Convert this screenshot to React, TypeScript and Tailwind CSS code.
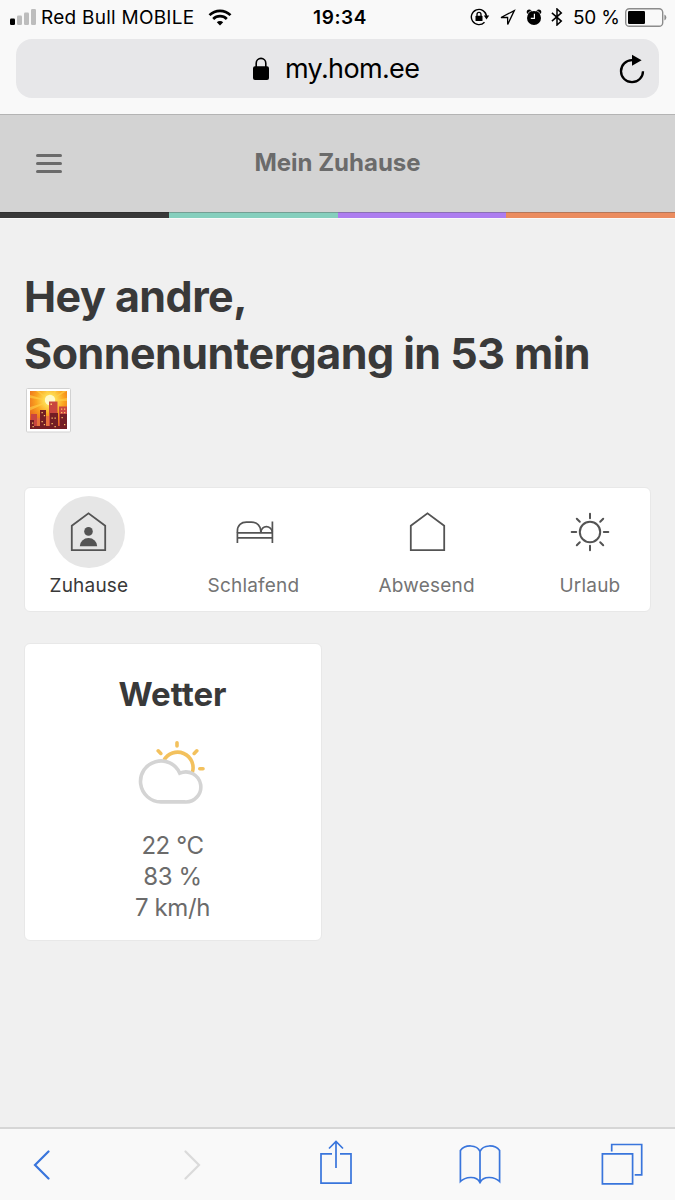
import { useState } from 'react';
import type { ReactNode } from 'react';

type IconProps = { className?: string };

// Status bar icons
const SignalIcon = ({ className }: IconProps) => (
  <svg className={className} width="26" height="16" viewBox="0 0 26 16">
    <rect x="0" y="9.5" width="5" height="6.5" rx="1.2" fill="#000" />
    <rect x="7" y="6.5" width="5" height="9.5" rx="1.2" fill="#bdbdbd" />
    <rect x="14" y="3.5" width="5" height="12.5" rx="1.2" fill="#bdbdbd" />
    <rect x="21" y="0" width="5" height="16" rx="1.2" fill="#bdbdbd" />
  </svg>
);

const WifiIcon = ({ className }: IconProps) => (
  <svg className={className} width="24" height="17" viewBox="0 0 24 17" fill="none" stroke="#000" strokeWidth="2.7">
    <path d="M1.5 6.1a15 15 0 0 1 21 0" />
    <path d="M5.2 10a9.6 9.6 0 0 1 13.6 0" />
    <path d="M12 16.6l-3.2-3.3a4.6 4.6 0 0 1 6.4 0z" fill="#000" stroke="none" />
  </svg>
);

const RotationLockIcon = ({ className }: IconProps) => (
  <svg className={className} width="20" height="18" viewBox="0 0 20 18" fill="none" stroke="#000">
    <path d="M14.5 14.2A7.6 7.6 0 1 1 16.5 8.2" strokeWidth="1.4" />
    <path d="M13.8 7.6h5.4l-2.7 3.8z" fill="#000" stroke="none" />
    <rect x="5.5" y="7.8" width="7" height="5.2" rx="0.6" fill="#000" stroke="none" />
    <path d="M7 8V6.4a2 2 0 0 1 4 0V8" strokeWidth="1.3" />
  </svg>
);

const LocationIcon = ({ className }: IconProps) => (
  <svg className={className} width="16" height="17" viewBox="0 0 16 17" fill="none" stroke="#000" strokeWidth="1.3">
    <path d="M14.3 1.6L1 8.5h6.6l.1 7z" />
  </svg>
);

const AlarmIcon = ({ className }: IconProps) => (
  <svg className={className} width="16" height="17" viewBox="0 0 16 17">
    <circle cx="8" cy="9" r="7" />
    <circle cx="3.2" cy="2.9" r="2.5" />
    <circle cx="12.8" cy="2.9" r="2.5" />
    <path d="M.9 6.1A8 8 0 0 1 5.2 1.8M15.1 6.1a8 8 0 0 0-4.3-4.3" stroke="#f9f9f9" strokeWidth=".7" fill="none" />
    <path d="M8.4 4.8v4.6H4.8" stroke="#f9f9f9" strokeWidth="1.2" fill="none" />
  </svg>
);

const BluetoothIcon = ({ className }: IconProps) => (
  <svg className={className} width="12" height="18" viewBox="0 0 12 18" fill="none" stroke="#000" strokeWidth="1.5">
    <path d="M.9 4.9l9.4 8.2L6 17V1l4.3 3.9L.9 13.1" />
  </svg>
);

const BatteryIcon = ({ className }: IconProps) => (
  <svg className={className} width="42" height="19" viewBox="0 0 42 19">
    <rect x=".7" y=".7" width="37" height="17.6" rx="3.6" fill="none" stroke="#8c8c8c" strokeWidth="1.4" />
    <rect x="3" y="3" width="17" height="13" rx="1.2" />
    <path d="M39.4 6.4v6.2a3.4 3.4 0 0 0 0-6.2z" fill="#8c8c8c" />
  </svg>
);

// Address bar icons
const LockIcon = ({ className }: IconProps) => (
  <svg className={className} width="18" height="24" viewBox="0 0 18 24">
    <rect x="1" y="9.3" width="16" height="13.7" rx="2" />
    <path d="M4.2 10V6.2a4.8 4.8 0 0 1 9.6 0V10" fill="none" stroke="#000" strokeWidth="1.6" />
  </svg>
);

const ReloadIcon = () => (
  <svg width="26" height="30" viewBox="0 0 26 30">
    <path d="M24 17.2A11 11 0 1 1 13 6.2h3" fill="none" stroke="#000" strokeWidth="2.3" />
    <path d="M13 .8v11l9.6-5.5z" />
  </svg>
);

// Mode icons
const HousePath = () => <path d="M1.8 38.2V13.8L18.5 1.3l16.7 12.5v24.4z" />;

const HomeIcon = () => (
  <svg width="37" height="40" viewBox="0 0 37 40" fill="none" stroke="#545454" strokeWidth="1.8">
    <HousePath />
    <circle cx="18.5" cy="19.4" r="4.3" fill="#545454" stroke="none" />
    <path d="M9.8 34.3a8.7 8.2 0 0 1 17.4 0z" fill="#545454" stroke="none" />
  </svg>
);

const AwayIcon = () => (
  <svg className="ml-[2px]" width="37" height="40" viewBox="0 0 37 40" fill="none" stroke="#545454" strokeWidth="1.8">
    <HousePath />
  </svg>
);

const BedIcon = () => (
  <svg className="ml-[3px]" width="38" height="24" viewBox="0 0 38 24" fill="none" stroke="#545454" strokeWidth="1.7">
    <path d="M1.4 23V12.5M36.4 1.5V23M1.4 12.9h35M1.4 17.9h35" />
    <path d="M1.4 13v-2c0-6 4-8.9 9-8.9h5c6 0 9.4 4.5 9.4 8.9v2" />
    <path d="M25 12c0-3 2.6-5.4 5.4-5.4S36 9 36.3 12" />
  </svg>
);

const SunIcon = () => (
  <svg className="ml-px" width="40" height="40" viewBox="0 0 40 40" fill="none" stroke="#545454" strokeWidth="2" strokeLinecap="round">
    <circle cx="20" cy="20" r="10.2" />
    <path d="M20 1.7v4.5M20 33.8v4.5M1.7 20h4.5M33.8 20h4.5M6.8 6.8l3 3M30.2 30.2l3 3M6.8 33.2l3-3M30.2 9.8l3-3" />
  </svg>
);

const PartlyCloudyIcon = () => (
  <svg width="69" height="64" viewBox="0 0 69 64" fill="none" strokeWidth="3.6" strokeLinecap="round">
    <g stroke="#f3c15d">
      <path d="M26 19.2A15.5 15.5 0 0 1 54.3 31.5" strokeLinecap="butt" />
      <path d="M39 1.8v3.2M20.2 9.8l2.6 2.6M58.8 9.8l-2.6 2.6M61.8 27.7h3.2" />
    </g>
    <path d="M22.8 60.9A20.5 20.5 0 1 1 41.8 32.2 15 15 0 1 1 46.7 60.9z" fill="#fff" stroke="#d4d4d4" />
  </svg>
);

// City skyline at sunset, framed like a small photo
const SunsetPicture = () => (
  <svg width="45" height="45" viewBox="0 0 45 45">
    <defs>
      <radialGradient id="sky" cx="54%" cy="24%" r="75%">
        <stop offset="0" stopColor="#fffbd0" />
        <stop offset=".16" stopColor="#ffe45a" />
        <stop offset=".5" stopColor="#fba520" />
        <stop offset="1" stopColor="#e2541b" />
      </radialGradient>
    </defs>
    <rect x=".5" y=".5" width="44" height="43.5" rx="1" fill="#fff" stroke="#d2d2d2" />
    <rect x="4" y="3" width="37" height="38" fill="url(#sky)" />
    <path
      d="M24 13L4 7v3zM24 13L10 3h3zM24 13L20 3h2.5zM24 13l4-10h2.5zM24 13L37 3h4zM24 13l17-3v3zM24 13L4 19v3.5z"
      fill="#ffd34a"
      opacity=".6"
    />
    <circle cx="24" cy="12" r="5.2" fill="#fff9c8" />
    <path d="M11 30h4v11h-4zM19 28h5v13h-5z" fill="#e8713c" />
    <path d="M5 26h6v15H5zM23 13.5h8.5V41H23zM33 18.5h8V41h-8z" fill="#c9463f" />
    <path d="M14 22h6v19h-6zM24 25h8v16h-8zM4 32h4v9H4zM34 26h7v15h-7zM8 38h33v3H8z" fill="#731d24" />
    <path
      d="M24.5 15.5H26V17h-1.5zM35 20.5h1.3v1.3H35zM38 20.5h1.3v1.3H38zM35 24h1.3v1.3H35zM38 24h1.3v1.3H38zM15.5 24h1.3v1.3h-1.3zM17.8 27h1.3v1.3h-1.3zM15.5 33h1.3v1.3h-1.3zM17.8 36h1.3v1.3h-1.3zM6 34.5h1.3v1.3H6zM25.5 29.5h1.3v1.3h-1.3zM28.5 29.5h1.3v1.3h-1.3zM25.5 35h1.3v1.3h-1.3zM28.5 38h1.3v1.3h-1.3zM35.5 29h1.3v1.3h-1.3zM38 36h1.3v1.3H38zM6.5 38h1.3v1.3H6.5z"
      fill="#ffc56b"
    />
  </svg>
);

type Mode = { id: string; label: string; icon: ReactNode };

const modes: Mode[] = [
  { id: 'home', label: 'Zuhause', icon: <HomeIcon /> },
  { id: 'sleeping', label: 'Schlafend', icon: <BedIcon /> },
  { id: 'away', label: 'Abwesend', icon: <AwayIcon /> },
  { id: 'vacation', label: 'Urlaub', icon: <SunIcon /> },
];

const weather = ['22 °C', '83 %', '7 km/h'];

function BrowserHeader() {
  return (
    <header className="h-[115px] shrink-0 border-b border-[#b4b4b4] bg-[#f9f9f9] text-black">
      <div className="grid h-[34px] grid-cols-[300px_80px_1fr] items-center text-[19px] leading-none">
        <div className="flex items-center pl-[10px] whitespace-nowrap">
          <SignalIcon />
          <span className="ml-[5px] w-[153px] tracking-[0.25px]">Red Bull MOBILE</span>
          <WifiIcon className="ml-[14px]" />
        </div>
        <span className="text-center font-semibold tracking-[0.6px]">19:34</span>
        <div className="flex items-center justify-end pr-[8px] whitespace-nowrap">
          <RotationLockIcon />
          <LocationIcon className="ml-[10px]" />
          <AlarmIcon className="ml-[10px]" />
          <BluetoothIcon className="ml-[9px]" />
          <span className="ml-[10px] w-[47px] tracking-[-0.2px]">50 %</span>
          <BatteryIcon className="ml-[5px]" />
        </div>
      </div>
      <div className="mx-4 mt-[5px] flex h-[59px] items-center rounded-2xl bg-[#e7e7e9] pr-[14px] pl-[236px]">
        <LockIcon />
        <span className="ml-[15px] text-[27px] leading-none tracking-[-0.65px]">my.hom.ee</span>
        <button className="ml-auto" aria-label="Neu laden">
          <ReloadIcon />
        </button>
      </div>
    </header>
  );
}

function AppHeader() {
  return (
    <div className="shrink-0">
      <div className="grid h-[97px] grid-cols-[1fr_auto_1fr] items-center bg-[#d3d3d3] pb-px text-[#6b6b6b]">
        <button className="ml-9 flex w-[26px] flex-col gap-[5px]" aria-label="Menü">
          <span className="h-[3px] rounded-full bg-[#6b6b6b]" />
          <span className="h-[3px] rounded-full bg-[#6b6b6b]" />
          <span className="h-[3px] rounded-full bg-[#6b6b6b]" />
        </button>
        <h1 className="text-2xl leading-none font-bold">Mein Zuhause</h1>
      </div>
      <div className="grid h-[6px] grid-cols-4 shadow-[0_1px_0_#fafafa]">
        <div className="border-t border-[#303030] bg-[#393939]" />
        <div className="border-t border-[#739f94] bg-[#85cfbd]" />
        <div className="border-t border-[#8b6fb5] bg-[#ad7df0]" />
        <div className="border-t border-[#b5775a] bg-[#eb8c5f]" />
      </div>
    </div>
  );
}

function ModeSelector() {
  const [active, setActive] = useState('home');

  return (
    <div className="flex h-[125px] justify-between rounded-md border border-[#e8e8e8] bg-white pt-[8px] pr-[24px] pl-[24.5px]">
      {modes.map((mode) => (
        <button key={mode.id} className="flex min-w-[72px] flex-col items-center" onClick={() => setActive(mode.id)}>
          <span
            className={`flex size-[72px] items-center justify-center rounded-full ${mode.id === active ? 'bg-[#e6e6e6]' : ''}`}
          >
            {mode.icon}
          </span>
          <span
            className={`mt-[8px] text-[19px] leading-5 tracking-[0.2px] ${mode.id === active ? 'text-[#393939]' : 'text-[#747474]'}`}
          >
            {mode.label}
          </span>
        </button>
      ))}
    </div>
  );
}

function WeatherCard() {
  return (
    <div className="mt-[31px] flex h-[298px] w-[298px] flex-col items-center rounded-md border border-[#e8e8e8] bg-white pt-[30px] pr-px">
      <h3 className="text-[33px] leading-10 font-bold text-[#393939]">Wetter</h3>
      <div className="mt-[27px]">
        <PartlyCloudyIcon />
      </div>
      <div className="mt-[25px] text-center text-2xl leading-[31px] tracking-[-0.4px] text-[#6b6b6b]">
        {weather.map((value) => (
          <p key={value}>{value}</p>
        ))}
      </div>
    </div>
  );
}

function BrowserToolbar() {
  return (
    <nav className="flex h-[73px] shrink-0 items-center border-t-2 border-[#d6d6d6] bg-[#f9f9f9] pl-[32px] text-[#3975dc]">
      <svg width="20" height="30" viewBox="0 0 20 30" fill="none" stroke="currentColor" strokeWidth="2.2" strokeLinecap="round">
        <path d="M16.5 1.5L3 15l13.5 13.5" />
      </svg>
      <svg className="ml-[130px]" width="20" height="30" viewBox="0 0 20 30" fill="none" stroke="#dadada" strokeWidth="2.2" strokeLinecap="round">
        <path d="M3.5 1.5L17 15 3.5 28.5" />
      </svg>
      <svg className="mb-[6px] ml-[117px]" width="34" height="46" viewBox="0 0 34 46" fill="none" stroke="currentColor" strokeWidth="1.7">
        <path d="M13 14.8H2v29.4h30V14.8H21" />
        <path d="M17 29V2.5M10 9.5l7-7 7 7" />
      </svg>
      <svg className="ml-[106px]" width="42" height="42" viewBox="0 0 42 42" fill="none" stroke="currentColor" strokeWidth="1.7">
        <path d="M21 7.500C18 .3 6 .3 1.4 6.500v31C6 33.200 17 30.800 21 38.500 25 30.800 36 33.200 40.600 37.500v-31C36 .3 24 .3 21 7.500zM21 7.500v31.500" />
      </svg>
      <svg className="mb-[2px] ml-[100px]" width="42" height="42" viewBox="0 0 42 42" fill="none" stroke="currentColor" strokeWidth="1.7">
        <path d="M1.4 10.8h30.2v30H1.4z" />
        <path d="M10.7 8.5V1.5h30v30.3h-7" />
      </svg>
    </nav>
  );
}

export default function App() {
  return (
    <div className="flex h-[1200px] w-[675px] flex-col overflow-hidden bg-[#f0f0f0] font-['Inter',sans-serif]">
      <BrowserHeader />
      <AppHeader />
      <main className="flex-1 px-[24px] pt-[50px]">
        <h2 className="text-[43px] leading-[57px] font-bold tracking-[-0.53px] text-[#393939]">
          Hey andre,
          <br />
          Sonnenuntergang in 53 min
        </h2>
        <div className="mt-[6px] mb-[54px] ml-[2px] h-[45px]">
          <SunsetPicture />
        </div>
        <ModeSelector />
        <WeatherCard />
      </main>
      <BrowserToolbar />
    </div>
  );
}
